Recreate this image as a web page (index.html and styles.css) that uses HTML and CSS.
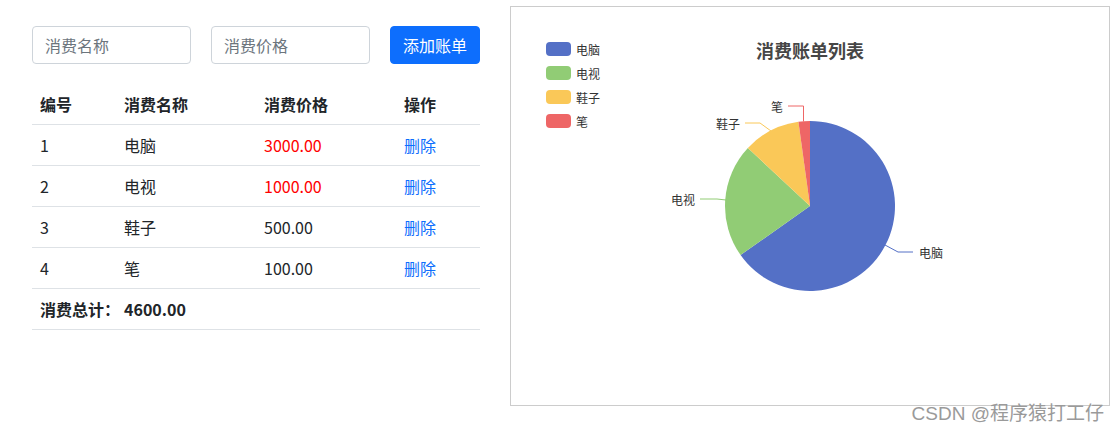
FILE: index.html
```html
<!DOCTYPE html>
<html lang="zh-CN">
<head>
    <meta charset="UTF-8">
    <meta name="viewport" content="width=device-width, initial-scale=1.0">
    <title>消费账单</title>
    <link rel="stylesheet" href="styles.css">
</head>
<body>

<div class="page">
    <div class="bill">
        <div class="form-row">
            <input type="text" class="form-control" placeholder="消费名称">
            <input type="text" class="form-control" placeholder="消费价格">
            <button class="btn-primary">添加账单</button>
        </div>

        <table class="table">
            <thead>
                <tr>
                    <th class="col-id">编号</th>
                    <th class="col-name">消费名称</th>
                    <th class="col-price">消费价格</th>
                    <th class="col-op">操作</th>
                </tr>
            </thead>
            <tbody>
                <tr>
                    <td>1</td>
                    <td>电脑</td>
                    <td class="expensive">3000.00</td>
                    <td><a href="#" class="del">删除</a></td>
                </tr>
                <tr>
                    <td>2</td>
                    <td>电视</td>
                    <td class="expensive">1000.00</td>
                    <td><a href="#" class="del">删除</a></td>
                </tr>
                <tr>
                    <td>3</td>
                    <td>鞋子</td>
                    <td>500.00</td>
                    <td><a href="#" class="del">删除</a></td>
                </tr>
                <tr>
                    <td>4</td>
                    <td>笔</td>
                    <td>100.00</td>
                    <td><a href="#" class="del">删除</a></td>
                </tr>
                <tr class="total">
                    <td class="nowrap">消费总计：</td>
                    <td>4600.00</td>
                    <td></td>
                    <td></td>
                </tr>
            </tbody>
        </table>
    </div>

    <div class="chart">
        <svg width="598" height="398" viewBox="0 0 598 398">
            <!-- legend -->
            <g class="legend">
                <rect x="35" y="35" width="25" height="14" rx="4" fill="#5470c6"/>
                <text x="65" y="42">电脑</text>
                <rect x="35" y="59" width="25" height="14" rx="4" fill="#91cc75"/>
                <text x="65" y="66">电视</text>
                <rect x="35" y="83" width="25" height="14" rx="4" fill="#fac858"/>
                <text x="65" y="90">鞋子</text>
                <rect x="35" y="107" width="25" height="14" rx="4" fill="#ee6666"/>
                <text x="65" y="114">笔</text>
            </g>

            <text class="title" x="299" y="43">消费账单列表</text>

            <!-- pie -->
            <path d="M299,199 L299,114 A85,85 0 1 1 229.56,248.02 Z" fill="#5470c6"/>
            <path d="M299,199 L229.56,248.02 A85,85 0 0 1 236.88,140.98 Z" fill="#91cc75"/>
            <path d="M299,199 L236.88,140.98 A85,85 0 0 1 287.43,114.79 Z" fill="#fac858"/>
            <path d="M299,199 L287.43,114.79 A85,85 0 0 1 299,114 Z" fill="#ee6666"/>

            <!-- labels -->
            <g class="label-lines">
                <polyline points="374,238 387,245 402,245" stroke="#5470c6"/>
                <polyline points="215,193 206,192 189,192" stroke="#91cc75"/>
                <polyline points="260,124 249,116 234,116" stroke="#fac858"/>
                <polyline points="292.5,114.5 292.5,99 277,99" stroke="#ee6666"/>
            </g>
            <g class="labels">
                <text x="408" y="245">电脑</text>
                <text x="184" y="192" text-anchor="end">电视</text>
                <text x="229" y="116" text-anchor="end">鞋子</text>
                <text x="272" y="99" text-anchor="end">笔</text>
            </g>
        </svg>
    </div>
</div>

<div class="watermark">CSDN @程序猿打工仔</div>

</body>
</html>
```

FILE: styles.css
```css
body {
    margin: 0;
    color: #212529;
    font-family: "Noto Sans CJK SC", "Liberation Sans", sans-serif;
    font-size: 16px;
    line-height: 1.5;
    background: #fff;
}
.page {
    display: flex;
    align-items: flex-start;
    gap: 30px;
    padding: 6px 0 0 32px;
}
.bill {
    width: 448px;
    flex-shrink: 0;
    padding-top: 20px;
}
.form-row {
    display: flex;
    gap: 20px;
    margin-bottom: 20px;
}
.form-control {
    width: 159px;
    height: 38px;
    box-sizing: border-box;
    padding: 6px 12px;
    font: inherit;
    color: #212529;
    border: 1px solid #ced4da;
    border-radius: 4px;
}
.form-control::placeholder {
    color: #6c757d;
}
.btn-primary {
    width: 90px;
    height: 38px;
    padding: 6px 12px;
    font: inherit;
    color: #fff;
    background-color: #0d6efd;
    border: 1px solid #0d6efd;
    border-radius: 4px;
    cursor: pointer;
}
.table {
    width: 448px;
    table-layout: fixed;
    border-collapse: collapse;
}
.table th,
.table td {
    padding: 8px;
    text-align: left;
    border-bottom: 1px solid #dee2e6;
    height: 24px;
}
.table th {
    font-weight: bold;
}
.col-id { width: 68px; }
.col-name { width: 124px; }
.col-price { width: 124px; }
.col-op { width: 68px; }
.expensive {
    color: #ff0000;
}
.del {
    color: #0d6efd;
    text-decoration: none;
}
.total td {
    font-weight: bold;
}
.nowrap {
    white-space: nowrap;
}
.chart {
    width: 600px;
    height: 400px;
    flex-shrink: 0;
    box-sizing: border-box;
    border: 1px solid #ccc;
}
.chart svg {
    display: block;
    font-family: "Noto Sans CJK SC", "Liberation Sans", sans-serif;
}
.legend text,
.labels text {
    font-size: 12px;
    fill: #333;
    dominant-baseline: central;
}
.title {
    font-size: 18px;
    font-weight: bold;
    fill: #464646;
    text-anchor: middle;
    dominant-baseline: central;
}
.label-lines polyline {
    fill: none;
    stroke-width: 1;
}
.watermark {
    position: absolute;
    right: 16px;
    bottom: 4px;
    font-family: "Liberation Sans", "Noto Sans CJK SC", sans-serif;
    font-size: 19px;
    line-height: 1.2;
    color: #9a9a9a;
}
```
